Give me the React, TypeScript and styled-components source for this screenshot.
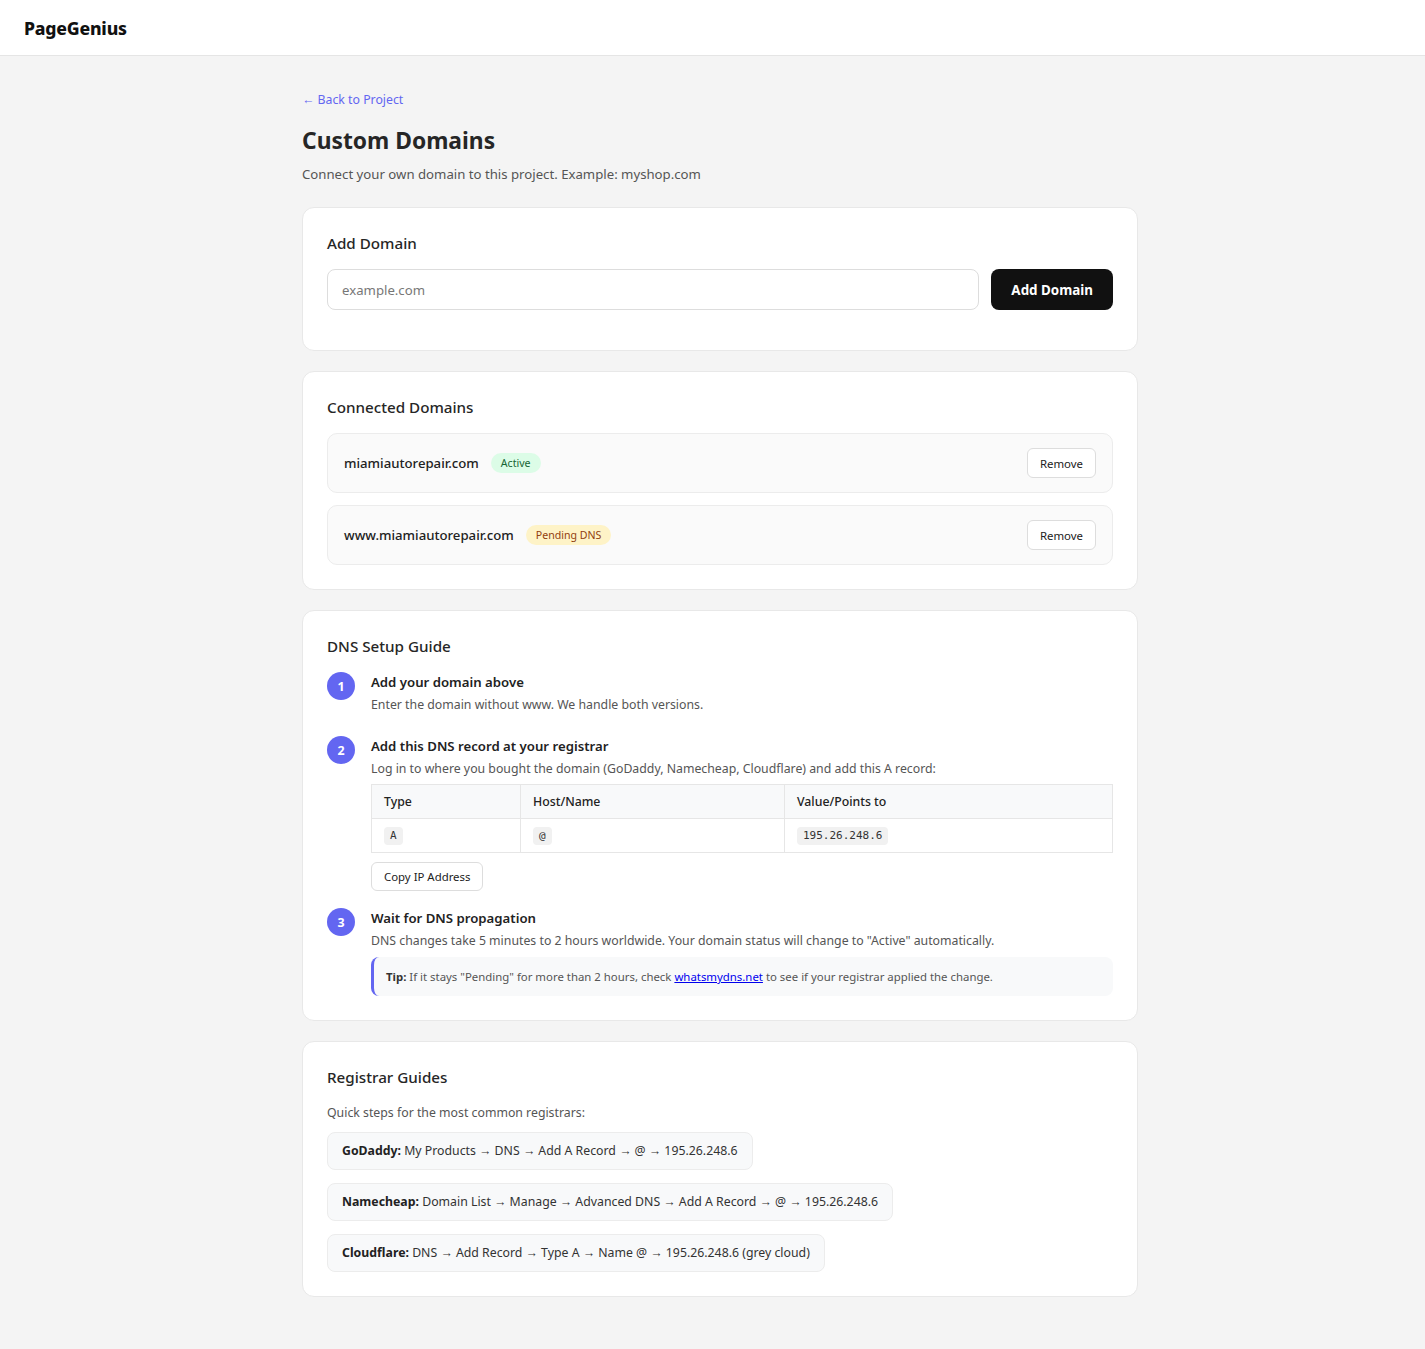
import React from "react";
import styled, { createGlobalStyle } from "styled-components";

const Global = createGlobalStyle`
  * { box-sizing: border-box; }
  body {
    margin: 0;
    background: #f4f4f4;
    font-family: "Noto Sans", "Open Sans", sans-serif;
    color: #222;
  }
`;

const Header = styled.header`
  height: 56px;
  background: #fff;
  border-bottom: 1px solid #e5e5e5;
  display: flex;
  align-items: center;
  padding: 0 24px;
`;

const Logo = styled.div`
  font-size: 17.6px;
  font-weight: 800;
  color: #111;
  letter-spacing: -0.2px;
`;

const Main = styled.main`
  width: 836px;
  margin-left: calc(50% - 410.5px);
  padding: 35px 0 52px;
  display: flex;
  flex-direction: column;
`;

const BackLink = styled.a`
  color: #6366f1;
  font-size: 12.3px;
  text-decoration: none;
  line-height: 18px;
`;

const Title = styled.h1`
  margin: 17px 0 0;
  font-size: 22.8px;
  font-weight: 700;
  color: #262626;
  line-height: 30px;
`;

const Subtitle = styled.p`
  margin: 8px 0 23px;
  font-size: 13.2px;
  color: #555;
  line-height: 20px;
`;

const Card = styled.section`
  background: #fff;
  border: 1px solid #e8e8e8;
  border-radius: 12px;
  padding: 24px;
  margin-bottom: 20px;
  display: flex;
  flex-direction: column;
`;

const CardTitle = styled.h2`
  margin: 0 0 15px;
  font-size: 15.2px;
  font-weight: 500;
  color: #262626;
  line-height: 22px;
`;

const AddRow = styled.div`
  display: flex;
  gap: 12px;
  margin-bottom: 16px;
`;

const Input = styled.input`
  flex: 1;
  height: 41px;
  border: 1px solid #ddd;
  border-radius: 8px;
  padding: 0 14px;
  font-family: inherit;
  font-size: 13.2px;
  color: #222;
  outline: none;
  &::placeholder { color: #777; }
`;

const PrimaryButton = styled.button`
  height: 41px;
  padding: 0 20px;
  background: #111;
  color: #fff;
  border: none;
  border-radius: 8px;
  font-family: inherit;
  font-size: 13.4px;
  font-weight: 700;
`;

const DomainList = styled.div`
  display: flex;
  flex-direction: column;
  gap: 12px;
`;

const DomainRow = styled.div`
  height: 60px;
  background: #fafafa;
  border: 1px solid #ececec;
  border-radius: 10px;
  padding: 0 16px;
  display: flex;
  align-items: center;
  gap: 12px;
`;

const DomainName = styled.span`
  font-size: 13.2px;
  font-weight: 500;
  color: #222;
`;

const Badge = styled.span<{ $tone: "green" | "amber" }>`
  font-size: 10.6px;
  line-height: 20px;
  padding: 0 10px;
  border-radius: 999px;
  background: ${(p) => (p.$tone === "green" ? "#dcfce7" : "#fef3c7")};
  color: ${(p) => (p.$tone === "green" ? "#166534" : "#92400e")};
`;

const Spacer = styled.div`
  flex: 1;
`;

const SmallButton = styled.button`
  height: 30px;
  padding: 0 12px;
  background: #fff;
  border: 1px solid #ddd;
  border-radius: 6px;
  font-family: inherit;
  font-size: 11.4px;
  color: #222;
`;

const Step = styled.div`
  display: flex;
  gap: 16px;
  margin-bottom: 21px;
  &:last-child { margin-bottom: 0; }
`;

const StepNum = styled.div`
  flex: none;
  width: 28px;
  height: 28px;
  border-radius: 50%;
  background: #6366f1;
  color: #fff;
  font-size: 12.4px;
  font-weight: 700;
  display: flex;
  align-items: center;
  justify-content: center;
`;

const StepBody = styled.div`
  flex: 1;
  display: flex;
  flex-direction: column;
`;

const StepTitle = styled.div`
  font-size: 13.2px;
  font-weight: 600;
  color: #222;
  line-height: 20px;
`;

const StepText = styled.div`
  font-size: 12.3px;
  color: #555;
  line-height: 20px;
  margin-top: 3px;
`;

const Table = styled.table`
  width: 100%;
  border-collapse: collapse;
  margin-top: 5px;
  font-size: 12.3px;
`;

const Th = styled.th<{ $w?: string }>`
  text-align: left;
  font-weight: 500;
  background: #f8f9fa;
  border: 1px solid #e6e6e6;
  padding: 0 12px;
  height: 34px;
  width: ${(p) => p.$w || "auto"};
  color: #222;
`;

const Td = styled.td`
  border: 1px solid #e6e6e6;
  padding: 0 12px;
  height: 34px;
`;

const Code = styled.code`
  font-family: "DejaVu Sans Mono", "Liberation Mono", monospace;
  font-size: 11px;
  line-height: 18px;
  display: inline-block;
  background: #f1f1f1;
  border-radius: 4px;
  padding: 0 6px;
  color: #333;
`;

const CopyButton = styled(SmallButton)`
  align-self: flex-start;
  height: 29px;
  margin-top: 9px;
  margin-bottom: -4px;
`;

const Tip = styled.div`
  margin-top: 6px;
  background: #f8f9fa;
  border-left: 3px solid #6366f1;
  border-radius: 8px;
  padding: 10px 12px;
  font-size: 11.4px;
  color: #555;
  line-height: 19px;
  b { color: #333; font-weight: 700; }
  a { color: #0000ee; text-decoration: underline; }
`;

const GuideIntro = styled.p`
  margin: 0 0 9px;
  font-size: 12.3px;
  color: #555;
  line-height: 20px;
`;

const GuideList = styled.div`
  display: flex;
  flex-direction: column;
  align-items: flex-start;
  gap: 13px;
`;

const GuideItem = styled.div`
  background: #f8f9fa;
  border: 1px solid #ececec;
  border-radius: 8px;
  padding: 9px 14px;
  font-size: 12.3px;
  color: #333;
  line-height: 18px;
  b { font-weight: 700; color: #222; }
`;

const guides = [
  { name: "GoDaddy:", steps: "My Products → DNS → Add A Record → @ → 195.26.248.6" },
  { name: "Namecheap:", steps: "Domain List → Manage → Advanced DNS → Add A Record → @ → 195.26.248.6" },
  { name: "Cloudflare:", steps: "DNS → Add Record → Type A → Name @ → 195.26.248.6 (grey cloud)" },
];

const domains: { name: string; status: string; tone: "green" | "amber" }[] = [
  { name: "miamiautorepair.com", status: "Active", tone: "green" },
  { name: "www.miamiautorepair.com", status: "Pending DNS", tone: "amber" },
];

export default function App() {
  return (
    <>
      <Global />
      <Header>
        <Logo>PageGenius</Logo>
      </Header>
      <Main>
        <BackLink href="#">← Back to Project</BackLink>
        <Title>Custom Domains</Title>
        <Subtitle>Connect your own domain to this project. Example: myshop.com</Subtitle>

        <Card>
          <CardTitle>Add Domain</CardTitle>
          <AddRow>
            <Input placeholder="example.com" />
            <PrimaryButton>Add Domain</PrimaryButton>
          </AddRow>
        </Card>

        <Card>
          <CardTitle>Connected Domains</CardTitle>
          <DomainList>
            {domains.map((d) => (
              <DomainRow key={d.name}>
                <DomainName>{d.name}</DomainName>
                <Badge $tone={d.tone}>{d.status}</Badge>
                <Spacer />
                <SmallButton>Remove</SmallButton>
              </DomainRow>
            ))}
          </DomainList>
        </Card>

        <Card>
          <CardTitle>DNS Setup Guide</CardTitle>
          <Step>
            <StepNum>1</StepNum>
            <StepBody>
              <StepTitle>Add your domain above</StepTitle>
              <StepText>Enter the domain without www. We handle both versions.</StepText>
            </StepBody>
          </Step>
          <Step>
            <StepNum>2</StepNum>
            <StepBody>
              <StepTitle>Add this DNS record at your registrar</StepTitle>
              <StepText>
                Log in to where you bought the domain (GoDaddy, Namecheap, Cloudflare) and add this A record:
              </StepText>
              <Table>
                <thead>
                  <tr>
                    <Th $w="149px">Type</Th>
                    <Th $w="264px">Host/Name</Th>
                    <Th>Value/Points to</Th>
                  </tr>
                </thead>
                <tbody>
                  <tr>
                    <Td><Code>A</Code></Td>
                    <Td><Code>@</Code></Td>
                    <Td><Code>195.26.248.6</Code></Td>
                  </tr>
                </tbody>
              </Table>
              <CopyButton>Copy IP Address</CopyButton>
            </StepBody>
          </Step>
          <Step>
            <StepNum>3</StepNum>
            <StepBody>
              <StepTitle>Wait for DNS propagation</StepTitle>
              <StepText>
                DNS changes take 5 minutes to 2 hours worldwide. Your domain status will change to "Active" automatically.
              </StepText>
              <Tip>
                <b>Tip:</b> If it stays "Pending" for more than 2 hours, check{" "}
                <a href="#">whatsmydns.net</a> to see if your registrar applied the change.
              </Tip>
            </StepBody>
          </Step>
        </Card>

        <Card>
          <CardTitle>Registrar Guides</CardTitle>
          <GuideIntro>Quick steps for the most common registrars:</GuideIntro>
          <GuideList>
            {guides.map((g) => (
              <GuideItem key={g.name}>
                <b>{g.name}</b> {g.steps}
              </GuideItem>
            ))}
          </GuideList>
        </Card>
      </Main>
    </>
  );
}
